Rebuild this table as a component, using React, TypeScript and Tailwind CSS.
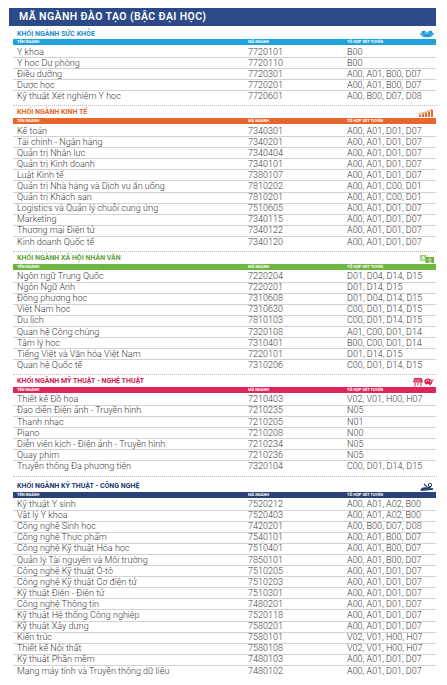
import React from "react";

type Row = [string, string, string];

type Section = {
  title: string;
  titleColor: string;
  barColor: string;
  gap: string;
  icon: React.ReactNode;
  rows: Row[];
};

const A4 = "A00, A01, D01, D07";

function HeartIcon() {
  return (
    <svg width="14" height="8" viewBox="0 0 28 16">
      <path d="M14 15 C 8 11, 3 9, 3 5 C 3 1, 9 0, 14 5 C 19 0, 25 1, 25 5 C 25 9, 20 11, 14 15 Z" fill="#1e9ad4" />
      <path d="M1 6 C 3 11, 8 13, 12 13 M27 6 C 25 11, 20 13, 16 13" stroke="#1e9ad4" strokeWidth="2.5" fill="none" />
      <path d="M9 6 C 11 4, 13 6, 14 8 C 15 6, 17 4, 19 6" stroke="#fff" strokeWidth="1.2" fill="none" />
    </svg>
  );
}

function ChartIcon() {
  return (
    <svg width="16" height="8" viewBox="0 0 32 16">
      <rect x="2" y="11" width="4" height="5" fill="#e8692b" />
      <rect x="8" y="9" width="4" height="7" fill="#e8692b" />
      <rect x="14" y="7" width="4" height="9" fill="#e8692b" />
      <rect x="20" y="5" width="4" height="11" fill="#e8692b" />
      <rect x="26" y="2" width="4" height="14" fill="#e8692b" />
      <path d="M1 9 C 10 8, 20 5, 29 0" stroke="#e8692b" strokeWidth="1.2" fill="none" />
    </svg>
  );
}

function TranslateIcon() {
  return (
    <svg width="14" height="8" viewBox="0 0 28 16">
      <rect x="0" y="0" width="13" height="12" fill="#9fd17c" />
      <rect x="11" y="4" width="17" height="12" fill="#6cb33f" />
      <text x="6.5" y="10" fontSize="10" fontFamily="Roboto, sans-serif" fontWeight="700" fill="#fff" textAnchor="middle">A</text>
      <text x="19.5" y="14" fontSize="9" fontFamily="'Noto Sans CJK SC', sans-serif" fill="#fff" textAnchor="middle">文</text>
    </svg>
  );
}

function ArtIcon() {
  return (
    <svg width="21" height="10" viewBox="0 0 42 20">
      <rect x="1" y="5" width="18" height="6" fill="#d9254f" />
      <rect x="2" y="2" width="16" height="3" fill="#d9254f" />
      <path d="M4 11 V19 M16 11 V19 M10 11 V17" stroke="#d9254f" strokeWidth="2" />
      <path d="M5 6 V10 M8 6 V10 M11 6 V10 M14 6 V10" stroke="#fff" strokeWidth="0.8" />
      <path d="M30 3 C 23 3, 21 9, 24 13 C 27 17, 30 13, 32 15 C 34 17, 38 14, 38 9 C 38 5, 34 3, 30 3 Z" fill="#d9254f" />
      <circle cx="27" cy="8" r="1.3" fill="#fff" />
      <circle cx="31" cy="6.5" r="1.3" fill="#fff" />
      <circle cx="35" cy="9" r="1.3" fill="#fff" />
      <path d="M34 17 L41 4" stroke="#d9254f" strokeWidth="1.6" />
    </svg>
  );
}

function TechIcon() {
  return (
    <svg width="14" height="8" viewBox="0 0 28 16">
      <path d="M1 15 C 2 9, 7 8, 12 9 L 19 7 C 22 6, 23 9, 20 10 L 15 11 L 24 10 C 27 10, 27 14, 24 14 L 1 16 Z" fill="#273c74" />
      <circle cx="20" cy="4" r="3.5" fill="none" stroke="#273c74" strokeWidth="2" />
      <path d="M8 2 L14 8" stroke="#273c74" strokeWidth="2.2" />
    </svg>
  );
}

const sections: Section[] = [
  {
    title: "KHỐI NGÀNH SỨC KHỎE",
    titleColor: "text-[#1c8cc7]",
    barColor: "bg-[#1fa2da]",
    gap: "mt-[3px]",
    icon: <HeartIcon />,
    rows: [
      ["Y khoa", "7720101", "B00"],
      ["Y học Dự phòng", "7720110", "B00"],
      ["Điều dưỡng", "7720301", "A00, A01, B00, D07"],
      ["Dược học", "7720201", "A00, A01, B00, D07"],
      ["Kỹ thuật Xét nghiệm Y học", "7720601", "A00, B00, D07, D08"],
    ],
  },
  {
    title: "KHỐI NGÀNH KINH TẾ",
    titleColor: "text-[#e5642a]",
    barColor: "bg-[#e8652c]",
    gap: "mt-[1.5px]",
    icon: <ChartIcon />,
    rows: [
      ["Kế toán", "7340301", A4],
      ["Tài chính - Ngân hàng", "7340201", A4],
      ["Quản trị Nhân lực", "7340404", A4],
      ["Quản trị Kinh doanh", "7340101", A4],
      ["Luật Kinh tế", "7380107", A4],
      ["Quản trị Nhà hàng và Dịch vụ ăn uống", "7810202", "A00, A01, C00, D01"],
      ["Quản trị Khách sạn", "7810201", "A00, A01, C00, D01"],
      ["Logistics và Quản lý chuỗi cung ứng", "7510605", A4],
      ["Marketing", "7340115", A4],
      ["Thương mại Điện tử", "7340122", A4],
      ["Kinh doanh Quốc tế", "7340120", A4],
    ],
  },
  {
    title: "KHỐI NGÀNH XÃ HỘI NHÂN VĂN",
    titleColor: "text-[#5fa23a]",
    barColor: "bg-[#6fb543]",
    gap: "mt-[1.5px]",
    icon: <TranslateIcon />,
    rows: [
      ["Ngôn ngữ Trung Quốc", "7220204", "D01, D04, D14, D15"],
      ["Ngôn Ngữ Anh", "7220201", "D01, D14, D15"],
      ["Đông phương học", "7310608", "D01, D04, D14, D15"],
      ["Việt Nam học", "7310630", "C00, D01, D14, D15"],
      ["Du lịch", "7810103", "C00, D01, D14, D15"],
      ["Quan hệ Công chúng", "7320108", "A01, C00, D01, D14"],
      ["Tâm lý học", "7310401", "B00, C00, D01, D14"],
      ["Tiếng Việt và Văn hóa Việt Nam", "7220101", "D01, D14, D15"],
      ["Quan hệ Quốc tế", "7310206", "C00, D01, D14, D15"],
    ],
  },
  {
    title: "KHỐI NGÀNH MỸ THUẬT - NGHỆ THUẬT",
    titleColor: "text-[#c8234f]",
    barColor: "bg-[#df2659]",
    gap: "mt-[1.5px]",
    icon: <ArtIcon />,
    rows: [
      ["Thiết kế Đồ họa", "7210403", "V02, V01, H00, H07"],
      ["Đạo diễn Điện ảnh - Truyền hình", "7210235", "N05"],
      ["Thanh nhạc", "7210205", "N01"],
      ["Piano", "7210208", "N00"],
      ["Diễn viên kịch - Điện ảnh - Truyền hình", "7210234", "N05"],
      ["Quay phim", "7210236", "N05"],
      ["Truyền thông Đa phương tiện", "7320104", "C00, D01, D14, D15"],
    ],
  },
  {
    title: "KHỐI NGÀNH KỸ THUẬT - CÔNG NGHỆ",
    titleColor: "text-[#263a70]",
    barColor: "bg-[#2a4278]",
    gap: "mt-[5px]",
    icon: <TechIcon />,
    rows: [
      ["Kỹ thuật Y sinh", "7520212", "A00, A01, A02, B00"],
      ["Vật lý Y khoa", "7520403", "A00, A01, A02, B00"],
      ["Công nghệ Sinh học", "7420201", "A00, B00, D07, D08"],
      ["Công nghệ Thực phẩm", "7540101", "A00, A01, B00, D07"],
      ["Công nghệ Kỹ thuật Hóa học", "7510401", "A00, A01, B00, D07"],
      ["Quản lý Tài nguyên và Môi trường", "7850101", "A00, A01, B00, D07"],
      ["Công nghệ Kỹ thuật Ô-tô", "7510205", A4],
      ["Công nghệ Kỹ thuật Cơ điện tử", "7510203", A4],
      ["Kỹ thuật Điện - Điện tử", "7510301", A4],
      ["Công nghệ Thông tin", "7480201", A4],
      ["Kỹ thuật Hệ thống Công nghiệp", "7520118", A4],
      ["Kỹ thuật Xây dựng", "7580201", A4],
      ["Kiến trúc", "7580101", "V02, V01, H00, H07"],
      ["Thiết kế Nội thất", "7580108", "V02, V01, H00, H07"],
      ["Kỹ thuật Phần mềm", "7480103", A4],
      ["Mạng máy tính và Truyền thông dữ liệu", "7480102", A4],
    ],
  },
];

function SectionBlock({ section, last }: { section: Section; last: boolean }) {
  return (
    <>
      <div className={`${section.gap} ml-[13px] w-[423px]`}>
        <div className="flex h-[10px] items-center justify-between pl-[4px] pr-[2px]">
          <span className={`text-[7px] font-bold leading-none ${section.titleColor}`}>{section.title}</span>
          {section.icon}
        </div>
        <div className={`flex h-[6px] items-center text-[4px] font-bold leading-none text-white ${section.barColor}`}>
          <span className="w-[235px] pl-[4px]">TÊN NGÀNH</span>
          <span className="w-[99px]">MÃ NGÀNH</span>
          <span>TỔ HỢP XÉT TUYỂN</span>
        </div>
        <div className="mt-[2px] font-light text-[9px] text-[#3a3a3a]">
          {section.rows.map((r, i) => (
            <div
              key={r[1] + r[0]}
              className={`flex h-[11.1px] items-center leading-none ${i < section.rows.length - 1 ? "border-b border-[#d2d2d2]" : ""}`}
            >
              <span className="w-[235px] pl-[4px]">{r[0]}</span>
              <span className="w-[99px]">{r[1]}</span>
              <span>{r[2]}</span>
            </div>
          ))}
        </div>
      </div>
      {!last && <div className="ml-[13px] mt-[3px] w-[424px] border-t border-dotted border-[#bdbdbd]" />}
    </>
  );
}

export default function App() {
  return (
    <div className="h-[685px] w-[447px] overflow-hidden bg-white font-['Roboto','Liberation_Sans',sans-serif]">
      <div className="ml-[9px] mt-[8px] flex h-[18px] w-[427px] items-center bg-[#2c4a87] pl-[10px]">
        <span className="text-[10.5px] font-semibold tracking-[0.4px] text-white">MÃ NGÀNH ĐÀO TẠO (BẬC ĐẠI HỌC)</span>
      </div>
      {sections.map((s, i) => (
        <SectionBlock key={s.title} section={s} last={i === sections.length - 1} />
      ))}
    </div>
  );
}
